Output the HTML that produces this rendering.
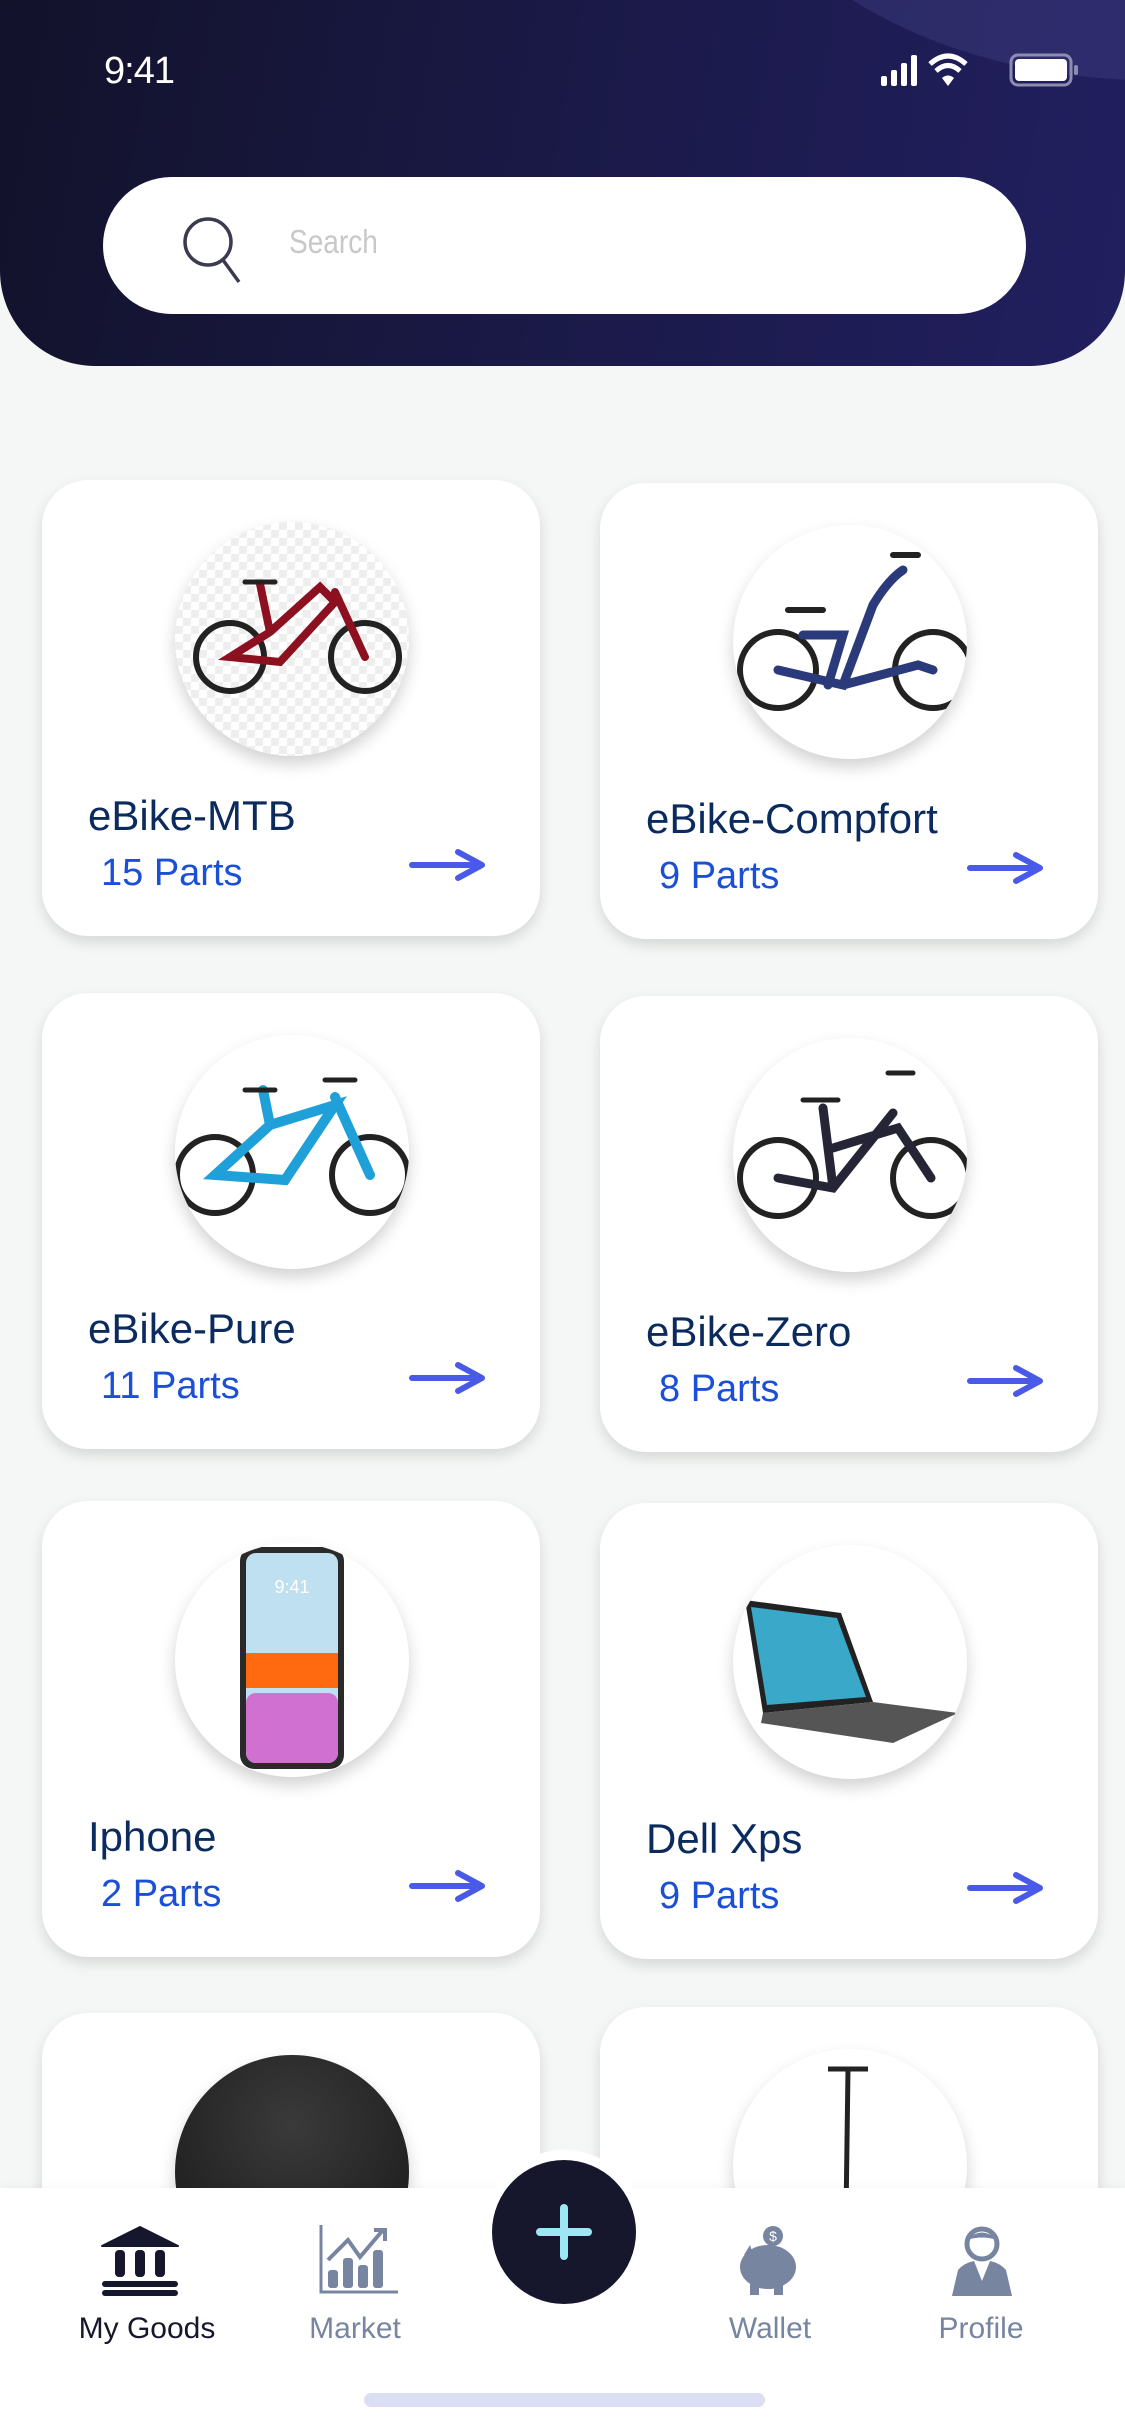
<!DOCTYPE html>
<html><head><meta charset="utf-8"><style>
*{margin:0;padding:0;box-sizing:border-box}
html,body{width:1125px;height:2436px;overflow:hidden}
body{background:#f5f7f6;position:relative;font-family:"Liberation Sans",sans-serif}
.hdr{position:absolute;left:0;top:0;width:1125px;height:366px;border-radius:0 0 95px 95px;background:linear-gradient(100deg,#12122b 0%,#1b1a4a 55%,#221f60 100%);overflow:hidden}
.hdr .blob{position:absolute;left:700px;top:-560px;width:900px;height:640px;border-radius:50%;background:rgba(80,78,150,.3)}
.time{position:absolute;left:104px;top:50px;color:#fff;font-size:38px;letter-spacing:-1px}
.search{position:absolute;left:103px;top:177px;width:923px;height:137px;border-radius:69px;background:#fff}
.search span{position:absolute;left:186px;top:46px;color:#c8c8c8;font-size:33px;transform:scaleX(.85);transform-origin:left}
.card{position:absolute;width:498px;height:456px;background:#fff;border-radius:46px;box-shadow:0 6px 14px rgba(0,0,0,.13)}
.circ{position:absolute;left:133px;top:42px;width:234px;height:234px;border-radius:50%;background:#fff;box-shadow:0 8px 16px rgba(0,0,0,.18);overflow:hidden}
.t{position:absolute;left:46px;top:312px;font-size:42px;color:#0b2b5e}
.p{position:absolute;left:59px;top:372px;font-size:38px;color:#1a4fd6}
.ar{position:absolute;left:366px;top:368px}
.nav{position:absolute;left:0;top:2188px;width:1125px;height:248px;background:#fff;box-shadow:0 -2px 8px rgba(0,0,0,.04)}
.lbl{position:absolute;top:2312px;font-size:30px;color:#7885a0;transform:translateX(-50%)}
.plusr{position:absolute;left:482px;top:2150px;width:164px;height:164px;border-radius:50%;background:#fff}
.plus{position:absolute;left:492px;top:2160px;width:144px;height:144px;border-radius:50%;background:#16172c}
.hi{position:absolute;left:364px;top:2393px;width:401px;height:14px;border-radius:7px;background:#dcdef3}
</style></head><body>
<div class="hdr"><div class="blob"></div></div>
<div class="time">9:41</div>
<svg style="position:absolute;left:880px;top:50px" width="210" height="40" viewBox="0 0 210 40">
<rect x="1" y="26" width="6" height="10" rx="2" fill="#fff"/><rect x="11" y="20" width="6" height="16" rx="2" fill="#fff"/><rect x="21" y="13" width="6" height="23" rx="2" fill="#fff"/><rect x="31" y="5" width="6" height="31" rx="2" fill="#fff"/>
<path d="M50 14 Q68 -2 86 14" stroke="#fff" stroke-width="5" fill="none"/><path d="M56 21 Q68 10 80 21" stroke="#fff" stroke-width="5" fill="none"/><path d="M62 28 L68 36 L74 28 Q68 23 62 28Z" fill="#fff"/>
<rect x="131" y="5" width="60" height="30" rx="7" stroke="#8d8db0" stroke-width="3" fill="none"/><rect x="135" y="9" width="52" height="22" rx="4" fill="#fff"/><rect x="194" y="15" width="4" height="10" rx="2" fill="#8d8db0"/>
</svg>
<div class="search">
<svg style="position:absolute;left:78px;top:38px" width="70" height="70" viewBox="0 0 70 70"><ellipse cx="27" cy="27" rx="23" ry="23" stroke="#3a3a50" stroke-width="3.5" fill="none"/><path d="M42 45 L58 67" stroke="#3a3a50" stroke-width="3.5"/></svg>
<span>Search</span></div>

<div class="card" style="left:42px;top:480px"><div class="circ" style="background:repeating-conic-gradient(#eee 0 25%,#fff 0 50%) 0 0/16px 16px">
<svg width="234" height="234" viewBox="0 0 234 234"><g fill="none" stroke-linecap="round"><circle cx="55" cy="135" r="34" stroke="#222" stroke-width="6"/><circle cx="190" cy="135" r="34" stroke="#222" stroke-width="6"/><path d="M55 135 L95 110 L145 65 L160 80 L105 140 Z M95 110 L85 62 M160 70 L190 135" stroke="#8c1020" stroke-width="8"/><path d="M70 60 H100" stroke="#222" stroke-width="5"/></g></svg></div>
<div class="t">eBike-MTB</div><div class="p">15 Parts</div>
<svg class="ar" width="80" height="34" viewBox="0 0 80 34"><path d="M4 17 H72 M50 4 L74 17 L50 30" stroke="#4a5ae8" stroke-width="6" fill="none" stroke-linecap="round" stroke-linejoin="round"/></svg></div>

<div class="card" style="left:600px;top:483px"><div class="circ">
<svg width="234" height="234" viewBox="0 0 234 234"><g fill="none" stroke-linecap="round"><circle cx="45" cy="145" r="38" stroke="#222" stroke-width="6"/><circle cx="200" cy="145" r="38" stroke="#222" stroke-width="6"/><path d="M45 145 L110 160 L140 80 Q155 55 170 45 M110 160 L185 140 L200 145 M70 110 H110 L95 160" stroke="#2a3a7a" stroke-width="9"/><path d="M55 85 H90 M160 30 H185" stroke="#222" stroke-width="6"/></g></svg></div>
<div class="t">eBike-Compfort</div><div class="p">9 Parts</div>
<svg class="ar" width="80" height="34" viewBox="0 0 80 34"><path d="M4 17 H72 M50 4 L74 17 L50 30" stroke="#4a5ae8" stroke-width="6" fill="none" stroke-linecap="round" stroke-linejoin="round"/></svg></div>

<div class="card" style="left:42px;top:993px"><div class="circ">
<svg width="234" height="234" viewBox="0 0 234 234"><g fill="none" stroke-linecap="round"><circle cx="40" cy="140" r="38" stroke="#222" stroke-width="6"/><circle cx="195" cy="140" r="38" stroke="#222" stroke-width="6"/><path d="M40 140 L95 90 L160 70 L110 145 Z M95 90 L88 55 M160 62 L195 140" stroke="#1fa0d8" stroke-width="10"/><path d="M70 55 H100 M150 45 H180" stroke="#222" stroke-width="5"/></g></svg></div>
<div class="t">eBike-Pure</div><div class="p">11 Parts</div>
<svg class="ar" width="80" height="34" viewBox="0 0 80 34"><path d="M4 17 H72 M50 4 L74 17 L50 30" stroke="#4a5ae8" stroke-width="6" fill="none" stroke-linecap="round" stroke-linejoin="round"/></svg></div>

<div class="card" style="left:600px;top:996px"><div class="circ">
<svg width="234" height="234" viewBox="0 0 234 234"><g fill="none" stroke-linecap="round"><circle cx="45" cy="140" r="38" stroke="#222" stroke-width="6"/><circle cx="198" cy="140" r="38" stroke="#222" stroke-width="6"/><path d="M45 140 L100 150 L160 75 M100 150 L90 70 M100 110 L165 90 L198 140" stroke="#252535" stroke-width="9"/><path d="M70 62 H105 M155 35 H180" stroke="#222" stroke-width="5"/></g></svg></div>
<div class="t">eBike-Zero</div><div class="p">8 Parts</div>
<svg class="ar" width="80" height="34" viewBox="0 0 80 34"><path d="M4 17 H72 M50 4 L74 17 L50 30" stroke="#4a5ae8" stroke-width="6" fill="none" stroke-linecap="round" stroke-linejoin="round"/></svg></div>

<div class="card" style="left:42px;top:1501px"><div class="circ">
<svg width="234" height="234" viewBox="0 0 234 234"><rect x="65" y="4" width="104" height="222" rx="14" fill="#2a2a2a"/><rect x="71" y="10" width="92" height="210" rx="10" fill="#bfe0f0"/><rect x="71" y="110" width="92" height="35" fill="#ff6a10"/><rect x="71" y="150" width="92" height="70" rx="10" fill="#d070d0"/><text x="117" y="50" font-size="18" fill="#fff" text-anchor="middle" font-family="Liberation Sans">9:41</text></svg></div>
<div class="t">Iphone</div><div class="p">2 Parts</div>
<svg class="ar" width="80" height="34" viewBox="0 0 80 34"><path d="M4 17 H72 M50 4 L74 17 L50 30" stroke="#4a5ae8" stroke-width="6" fill="none" stroke-linecap="round" stroke-linejoin="round"/></svg></div>

<div class="card" style="left:600px;top:1503px"><div class="circ">
<svg width="234" height="234" viewBox="0 0 234 234"><path d="M12 55 L108 68 L140 157 L30 168 Z" fill="#222"/><path d="M18 62 L104 73 L133 152 L34 160 Z" fill="#3aa8c8"/><path d="M30 168 L140 157 L225 168 L160 198 L28 178 Z" fill="#555"/></svg></div>
<div class="t">Dell Xps</div><div class="p">9 Parts</div>
<svg class="ar" width="80" height="34" viewBox="0 0 80 34"><path d="M4 17 H72 M50 4 L74 17 L50 30" stroke="#4a5ae8" stroke-width="6" fill="none" stroke-linecap="round" stroke-linejoin="round"/></svg></div>

<div class="card" style="left:42px;top:2013px;height:300px"><div class="circ" style="background:radial-gradient(circle at 50% 30%,#3a3a3a,#151515)"></div></div>
<div class="card" style="left:600px;top:2007px;height:300px"><div class="circ"><svg width="234" height="234" viewBox="0 0 234 234"><path d="M95 20 H135 M115 20 L112 240" stroke="#222" stroke-width="5"/></svg></div></div>

<div class="nav"></div>
<svg style="position:absolute;left:101px;top:2226px" width="78" height="70" viewBox="0 0 78 70"><path d="M1 20 L39 1 L77 20 Z" fill="#16172c" stroke="#16172c" stroke-width="2" stroke-linejoin="round"/><rect x="14" y="24" width="10" height="27" rx="4" fill="#16172c"/><rect x="34" y="24" width="10" height="27" rx="4" fill="#16172c"/><rect x="54" y="24" width="10" height="27" rx="4" fill="#16172c"/><rect x="1" y="55" width="76" height="6" rx="3" fill="#16172c"/><rect x="1" y="64" width="76" height="6" rx="3" fill="#16172c"/></svg>
<svg style="position:absolute;left:318px;top:2225px" width="82" height="70" viewBox="0 0 82 70"><path d="M3 0 V67 H80" stroke="#7885a0" stroke-width="3" fill="none"/><rect x="10" y="45" width="10" height="18" rx="3" fill="#7885a0"/><rect x="25" y="33" width="10" height="30" rx="3" fill="#7885a0"/><rect x="40" y="40" width="10" height="23" rx="3" fill="#7885a0"/><rect x="55" y="25" width="10" height="38" rx="3" fill="#7885a0"/><path d="M10 35 L30 15 L42 32 L65 5" stroke="#7885a0" stroke-width="4" fill="none"/><path d="M56 5 H67 V16" stroke="#7885a0" stroke-width="4" fill="none"/></svg>
<div class="plusr"></div><div class="plus"><svg width="144" height="144" viewBox="0 0 144 144"><path d="M72 48 V96 M48 72 H96" stroke="#9fe6f5" stroke-width="8" stroke-linecap="round"/></svg></div>
<svg style="position:absolute;left:736px;top:2225px" width="68" height="70" viewBox="0 0 68 70"><circle cx="37" cy="11" r="10" fill="#7885a0"/><text x="37" y="16" font-size="14" fill="#fff" text-anchor="middle" font-family="Liberation Sans">$</text><ellipse cx="32" cy="42" rx="28" ry="22" fill="#7885a0"/><rect x="14" y="55" width="9" height="15" fill="#7885a0"/><rect x="38" y="55" width="9" height="15" fill="#7885a0"/><path d="M14 20 L18 32 L8 30Z" fill="#7885a0"/></svg>
<svg style="position:absolute;left:950px;top:2225px" width="64" height="72" viewBox="0 0 64 72"><circle cx="32" cy="19" r="15" fill="#fff" stroke="#7885a0" stroke-width="5"/><path d="M17 15 Q32 0 47 15 Q32 10 17 15Z" fill="#7885a0"/><path d="M2 71 L8 45 Q14 38 24 36 L32 56 L40 36 Q50 38 56 45 L62 71Z" fill="#7885a0"/></svg>
<div class="lbl" style="left:147px;color:#16172c">My Goods</div>
<div class="lbl" style="left:355px">Market</div>
<div class="lbl" style="left:770px">Wallet</div>
<div class="lbl" style="left:981px">Profile</div>
<div class="hi"></div>
</body></html>
